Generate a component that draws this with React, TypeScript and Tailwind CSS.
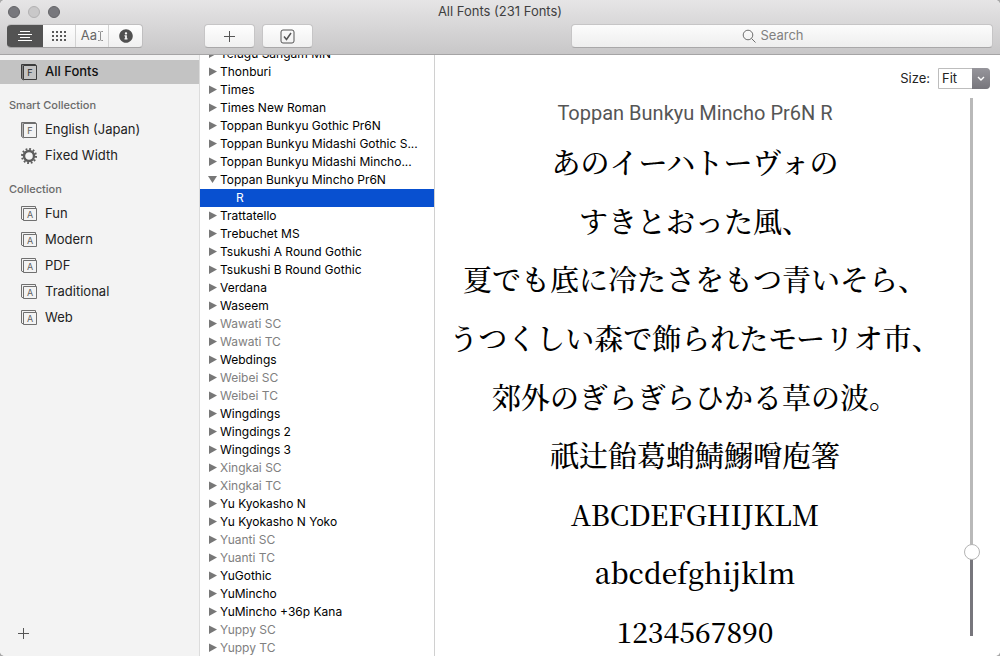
import { useState } from "react";
import type { CSSProperties } from "react";
import { FaInfoCircle } from "react-icons/fa";

type FontFamily = {
    name: string;
    disabled?: boolean;
    open?: boolean;
};

const fonts: FontFamily[] = [
    { name: "Telugu Sangam MN" },
    { name: "Thonburi" },
    { name: "Times" },
    { name: "Times New Roman" },
    { name: "Toppan Bunkyu Gothic Pr6N" },
    { name: "Toppan Bunkyu Midashi Gothic S..." },
    { name: "Toppan Bunkyu Midashi Mincho..." },
    { name: "Toppan Bunkyu Mincho Pr6N", open: true },
    { name: "Trattatello" },
    { name: "Trebuchet MS" },
    { name: "Tsukushi A Round Gothic" },
    { name: "Tsukushi B Round Gothic" },
    { name: "Verdana" },
    { name: "Waseem" },
    { name: "Wawati SC", disabled: true },
    { name: "Wawati TC", disabled: true },
    { name: "Webdings" },
    { name: "Weibei SC", disabled: true },
    { name: "Weibei TC", disabled: true },
    { name: "Wingdings" },
    { name: "Wingdings 2" },
    { name: "Wingdings 3" },
    { name: "Xingkai SC", disabled: true },
    { name: "Xingkai TC", disabled: true },
    { name: "Yu Kyokasho N" },
    { name: "Yu Kyokasho N Yoko" },
    { name: "Yuanti SC", disabled: true },
    { name: "Yuanti TC", disabled: true },
    { name: "YuGothic" },
    { name: "YuMincho" },
    { name: "YuMincho +36p Kana" },
    { name: "Yuppy SC", disabled: true },
    { name: "Yuppy TC", disabled: true },
];

const sample = [
    "あのイーハトーヴォの",
    "すきとおった風、",
    "夏でも底に冷たさをもつ青いそら、",
    "うつくしい森で飾られたモーリオ市、",
    "郊外のぎらぎらひかる草の波。",
    "祇辻飴葛蛸鯖鰯噌庖箸",
];

const latinSample = ["ABCDEFGHIJKLM", "abcdefghijklm", "1234567890"];

const BookIcon = ({ dark }: { dark?: boolean }) => (
    <svg width="18" height="18" viewBox="0 0 18 18" fill="none" stroke={dark ? "#3c3c3c" : "#6e6e6e"} aria-hidden="true">
        <path d="M1.5 15.5V1.5H15.5V3M1.5 15.5L3.5 17" />
        <path d="M2.5 2V16" strokeOpacity=".5" />
        <path d="M3.5 2.500H16.5V16.5H3.5Z" />
        <text x="10" y="13" textAnchor="middle" fontSize="9" fontFamily="Inter, sans-serif" fontWeight="500" stroke="none" fill={dark ? "#3c3c3c" : "#6e6e6e"}>F</text>
    </svg>
);

const CollectionIcon = () => (
    <svg width="18" height="18" viewBox="0 0 18 18" fill="none" stroke="#707070" aria-hidden="true">
        <path d="M1.5 14V1.5H15.5V3" />
        <path d="M1.5 14L3.5 15" />
        <path d="M3.5 3.5H16.5V15.5H3.5Z" />
        <text x="10" y="13" textAnchor="middle" fontSize="9" fontFamily="Inter, sans-serif" stroke="none" fill="#606060">A</text>
    </svg>
);

const GearIcon = () => (
    <svg width="18" height="18" viewBox="0 0 18 18" fill="none" stroke="#5c5c5c" aria-hidden="true">
        <circle cx="9" cy="9" r="7" strokeWidth="2" strokeDasharray="1.8 1.865" />
        <circle cx="9" cy="9" r="5" strokeWidth="2.4" />
    </svg>
);

const Arrow = ({ open }: { open?: boolean }) => (
    <svg className="shrink-0" width="9" height="10" viewBox="0 0 9 10" fill="#777777" aria-hidden="true">
        {open ? <path d="M0 1H9L4.5 8Z" /> : <path d="M1 .5L9 4.5L1 9Z" />}
    </svg>
);

const PlusIcon = ({ size }: { size: number }) => (
    <svg width={size} height={size} viewBox="0 0 13 13" stroke="#555555" fill="none" aria-hidden="true">
        <path d="M6.5 1V12M1 6.5H12" />
    </svg>
);

const Toolbar = () => {
    const button = "flex h-6 w-[51px] items-center justify-center rounded-[4px] border border-[#c6c5c6] border-b-[#a9a8a9] bg-linear-to-b from-[#fefefe] to-[#f0f0f0]";

    return (
        <header className="shrink-0 border-b border-[#a5a4a5] bg-linear-to-b from-[#e6e5e6] to-[#c8c7c8]">
            <div className="relative flex h-6 items-center justify-center">
                <div className="absolute left-2 flex gap-2">
                    <button aria-label="Close" className="size-3 rounded-full border border-[#636367] bg-[#78787d]" />
                    <button aria-label="Minimize" className="size-3 rounded-full border border-[#b2b1b2] bg-[#c9c8c9]" />
                    <button aria-label="Zoom" className="size-3 rounded-full border border-[#636367] bg-[#78787d]" />
                </div>
                <h1 className="text-[13px] text-[#3f3f3f]">All Fonts (231 Fonts)</h1>
            </div>
            <div className="flex h-[30px] items-start px-[7px]">
                <div className="flex h-6 w-[136px] overflow-hidden rounded-[4px] border border-l-0 border-[#c0bfc0] border-b-[#a5a4a5] bg-linear-to-b from-[#fefefe] to-[#f0f0f0]">
                    <button aria-label="Sample" className="flex w-9 items-center justify-center bg-[#535353]">
                        <svg width="16" height="12" viewBox="0 0 16 12" stroke="#ffffff" aria-hidden="true">
                            <path d="M3 1.5H13M1 4.5H15M3 7.5H13M1 10.5H15" />
                        </svg>
                    </button>
                    <button aria-label="Repertoire" className="flex w-[33px] items-center justify-center border-r border-[#d2d2d2]">
                        <svg width="16" height="12" viewBox="0 0 16 12" stroke="#5a5a5a" strokeWidth="2" strokeDasharray="2 2" aria-hidden="true">
                            <path d="M1 2H15M1 6H15M1 10H15" />
                        </svg>
                    </button>
                    <button aria-label="Custom" className="flex w-[33px] items-center justify-center border-r border-[#d2d2d2] text-[13px] text-[#666666]">
                        Aa
                        <svg width="6" height="12" viewBox="0 0 6 12" fill="none" stroke="#909090" aria-hidden="true">
                            <path d="M1 1.5H2.5L3.5 2L4.5 1.5H6M3.5 2V10M1 10.5H2.5L3.5 10L4.5 10.5H6" />
                        </svg>
                    </button>
                    <button aria-label="Information" className="flex flex-1 items-center justify-center">
                        <FaInfoCircle size={14} color="#505050" />
                    </button>
                </div>
                <div className="ml-[61px] flex gap-[7px]">
                    <button aria-label="Add font" className={button}>
                        <PlusIcon size={13} />
                    </button>
                    <button aria-label="Disable font" className={button}>
                        <svg width="15" height="15" viewBox="0 0 15 15" fill="none" stroke="#555555" aria-hidden="true">
                            <rect x="1" y="1" width="13" height="13" rx="2" />
                            <path d="M4 7.5L6.5 10.5L11 4" strokeWidth="1.5" />
                        </svg>
                    </button>
                </div>
                <label className="ml-[258px] flex h-6 flex-1 items-center justify-center gap-1 rounded-[4px] border border-[#c6c5c6] border-b-[#a9a8a9] bg-linear-to-b from-[#fcfcfc] to-[#eeeeee] pr-[18px]">
                    <svg width="14" height="14" viewBox="0 0 14 14" fill="none" stroke="#6e6e6e" aria-hidden="true">
                        <circle cx="6" cy="6" r="4.8" />
                        <path d="M9.5 9.5L13.5 13.5" />
                    </svg>
                    <input type="search" aria-label="Search" placeholder="Search" className="field-sizing-content bg-transparent text-[13px] outline-none placeholder:text-[#808080]" />
                </label>
            </div>
        </header>
    );
};

const Sidebar = () => {
    const item = "flex h-[26px] w-full items-center gap-[7px] pl-5 text-left";
    const heading = "flex h-6 items-center pl-[9px] text-[11px] font-medium text-[#6a6a6a]";

    return (
        <aside className="flex w-[200px] shrink-0 flex-col border-r border-[#dcdcdc] bg-[#f3f3f3] pt-[5px] text-[13px] text-[#222222]">
            <button className="mb-[9px] flex h-6 w-full items-center gap-[7px] bg-[#c3c3c3] pl-5 text-left font-medium text-[#111111]">
                <BookIcon dark />
                All Fonts
            </button>

            <h2 className={heading}>Smart Collection</h2>
            <button className={item}>
                <BookIcon />
                English (Japan)
            </button>
            <button className={item}>
                <GearIcon />
                Fixed Width
            </button>

            <h2 className={`mt-2 ${heading}`}>Collection</h2>
            {["Fun", "Modern", "PDF", "Traditional", "Web"].map((name) => (
                <button key={name} className={item}>
                    <CollectionIcon />
                    {name}
                </button>
            ))}

            <button aria-label="Add collection" className="mt-auto mb-4 ml-[17px] self-start">
                <PlusIcon size={13} />
            </button>
        </aside>
    );
};

const FontList = () => (
    <section className="w-[235px] shrink-0 overflow-hidden border-r border-[#d0d0d0] text-xs text-black">
        <ul className="-mt-2.5">
            {fonts.map((font) => (
                <li key={font.name}>
                    <button className={`flex h-[18px] w-full items-center gap-[3px] pl-2 text-left whitespace-nowrap ${font.disabled ? "text-[#808080]" : ""}`}>
                        <Arrow open={font.open} />
                        {font.name}
                    </button>
                    {font.open && (
                        <button className="flex h-[18px] w-full items-center bg-[#0850d0] pl-9 text-left text-white">R</button>
                    )}
                </li>
            ))}
        </ul>
    </section>
);

const Preview = () => {
    const [size, setSize] = useState(29);
    const fill = { "--fill": `${size / 2}%` } as CSSProperties;

    return (
        <main className="flex min-w-0 flex-1 flex-col bg-white">
            <div className="flex h-[43px] shrink-0 items-center justify-end gap-2 pt-1 pr-2.5 text-[13px] text-[#222222]">
                <label htmlFor="size">Size:</label>
                <div className="relative">
                    <select id="size" className="block h-[21px] w-[52px] appearance-none rounded-r-[4px] border border-[#bdbdbd] bg-white pl-[3px] text-[13px]">
                        <option>Fit</option>
                        <option>12</option>
                        <option>24</option>
                        <option>48</option>
                    </select>
                    <span className="pointer-events-none absolute inset-y-0 right-0 flex w-[18px] items-center justify-center rounded-r-[4px] bg-linear-to-b from-[#96959b] to-[#77767c]">
                        <svg width="8" height="6" viewBox="0 0 8 6" fill="none" stroke="#ffffff" strokeWidth="1.4" aria-hidden="true">
                            <path d="M1 1L4 4L7 1" />
                        </svg>
                    </span>
                </div>
            </div>
            <div className="flex min-h-0 flex-1">
                <div className="-mb-1 flex min-w-0 flex-1 flex-col text-center text-black">
                    <h2 className="h-[35px] font-['Roboto',sans-serif] text-xl leading-[30px] text-[#555555]">Toppan Bunkyu Mincho Pr6N R</h2>
                    {sample.map((line) => (
                        <p key={line} lang="ja" className="flex flex-1 items-center justify-center whitespace-nowrap font-['Noto_Serif_CJK_JP','Noto_Sans_CJK_JP',serif] text-[29px] leading-10 font-medium">
                            {line}
                        </p>
                    ))}
                    {latinSample.map((line) => (
                        <p key={line} className="flex flex-1 items-center justify-center font-['Noto_Serif_CJK_JP','Liberation_Serif',serif] text-[28px] leading-9 font-medium">
                            {line}
                        </p>
                    ))}
                </div>
                <div className="flex w-[45px] shrink-0 justify-center pr-3 pb-5">
                    <input
                        type="range"
                        aria-label="Sample size"
                        max={200}
                        value={size}
                        onChange={(e) => setSize(Number(e.target.value))}
                        style={fill}
                        className="h-full w-4 appearance-none bg-[linear-gradient(to_top,#77767c_var(--fill),#b9b9b9_var(--fill))] bg-size-[3px_100%] bg-center bg-no-repeat [direction:rtl] [writing-mode:vertical-lr] [&::-webkit-slider-thumb]:size-4 [&::-webkit-slider-thumb]:appearance-none [&::-webkit-slider-thumb]:rounded-full [&::-webkit-slider-thumb]:border [&::-webkit-slider-thumb]:border-[#b4b4b4] [&::-webkit-slider-thumb]:bg-white"
                    />
                </div>
            </div>
        </main>
    );
};

const App = () => {
    return (
        <div className="h-screen bg-[#a8a8a8]">
            <div className="flex h-full flex-col overflow-hidden rounded-[5px] bg-white font-['Inter','Noto_Sans_CJK_JP',sans-serif]">
                <Toolbar />
                <div className="flex min-h-0 flex-1">
                    <Sidebar />
                    <FontList />
                    <Preview />
                </div>
            </div>
        </div>
    );
};

export default App;
